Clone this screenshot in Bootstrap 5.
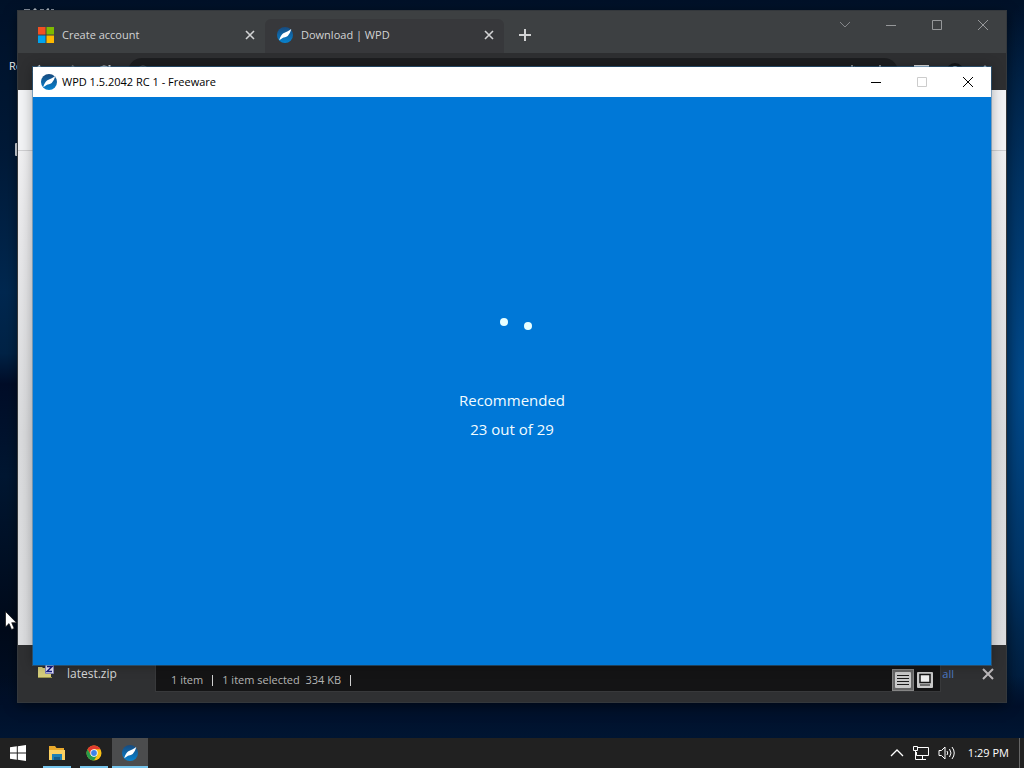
<!DOCTYPE html>
<html lang="en">
<head>
<meta charset="utf-8">
<meta name="viewport" content="width=device-width, initial-scale=1">
<title>WPD 1.5.2042 RC 1 - Freeware</title>
<link href="https://cdn.jsdelivr.net/npm/bootstrap@5.3.0/dist/css/bootstrap.min.css" rel="stylesheet">
<style>
  body { font-family: "Open Sans", "Noto Sans", sans-serif; font-size: 11px; line-height: 16px; }
  svg { display: block; flex: none; }
  button { background: none; border: 0; padding: 0; color: inherit; }
  .desktop {
    background:
      linear-gradient(180deg, transparent 88%, #00102a 92%, #001a3a 100%),
      radial-gradient(ellipse 60px 380px at 100% 50%, #004a8c 0, #003465 50%, transparent 100%),
      linear-gradient(180deg, #001128 0, #001a38 20%, #002850 38%, #002346 46%, #000d28 50%, #001732 62%, #000a1a 82%, #001430 100%);
  }
  /* windows */
  .win { position: absolute; }
  .browser-win { inset: 11px 18px 36px 18px; background: #2e2f32; box-shadow: 0 0 0 1px #34383c, 0 3px 12px #0008; }
  .files-win { left: 155px; right: 83px; bottom: 46px; height: 80px; background: #141415; border: 1px solid #38393b; color: #b4b4b4; }
  .app-win { inset: 67px 33px 73px 33px; background: #0078d7; box-shadow: 0 0 0 1px #2b6fa680, 0 0 12px #0005; }
  /* browser */
  .strip { background: #3d4042; height: 42px; flex: none; color: #d2d3d4; }
  .tab { width: 239px; height: 34px; padding: 0 10px 2px 12px; gap: 8px; border-radius: 6px 6px 0 0; }
  .tab.current { background: #37383b; }
  .tab-add { height: 34px; padding: 0 12px 2px 14px; }
  .caption-btn { width: 46px; height: 28px; display: flex; align-items: center; justify-content: center; }
  .tools { height: 37px; flex: none; padding: 0 16px 0 14px; gap: 16px; color: #e4e4e4; background: #2e2f31; }
  .omnibox { background: #1d1e20; border-radius: 14px; height: 28px; }
  .page { background: linear-gradient(180deg, #f5f5f6 0, #e8e8ea 25%, #d9dadc 62%, #dcdddf 100%); }
  .page-head { height: 61px; background: #f2f3f5; border-bottom: 1px solid #cfcfd1; }
  .shelf { height: 57px; flex: none; color: #d6d7d8; background: #2f3032; }
  .shelf a { color: #4d79c4; }
  .shelf-name { font-size: 12px; }
  .shelf-x { margin: 0 12px 0 28px; }
  .files-status { height: 22px; gap: 9px; padding: 0 4px 0 15px; }
  .rule { width: 1px; height: 11px; background: #d0d0d0; }
  .view { width: 22px; height: 22px; display: flex; align-items: center; justify-content: center; }
  .view.on { background: #666; outline: 1px solid #858585; outline-offset: -1px; }
  /* app */
  .titlebar { height: 30px; background: #fff; color: #000; }
  .app-name { padding-left: 5px; }
  .progress-text { font-size: 15px; line-height: 29px; color: #f2fcff; padding-bottom: 6px; }
  .loader { margin-bottom: 4px; }
  /* taskbar */
  .bar { height: 30px; background: #212121; color: #fff; }
  .task { width: 38px; height: 30px; display: flex; align-items: center; justify-content: center; position: relative; }
  .task.start { padding-right: 2px; }
  .task.open { width: 37px; }
  .task.open::after { content: ""; position: absolute; left: 5px; right: 4px; bottom: 0; height: 2px; background: #76c5ed; }
  .task.current { width: 36px; background: #4b4c4d; }
  .task.current::after { left: 0; right: 0; }
  .clock { font-size: 11px; margin: 0 10px 0 12px; }
  .peek { width: 5px; height: 30px; border-left: 1px solid #666; }
  .desk-label { position: absolute; left: 9px; top: 58px; color: #fff; }
  .desk-clip { position: absolute; left: 24px; top: 8px; }
  .desk-edge { position: absolute; left: 15px; top: 143px; width: 8px; height: 13px; background: #dfe5ec; border-radius: 1px; }
  .pointer { position: absolute; left: 5px; top: 611px; }
</style>
</head>
<body>
<svg width="0" height="0" class="position-absolute" aria-hidden="true">
  <defs>
    <linearGradient id="wg" x1="0" y1="0" x2="0" y2="1"><stop offset="0" stop-color="#174a7e"/><stop offset="1" stop-color="#0783d0"/></linearGradient>
    <symbol id="wpd" viewBox="0 0 16 16">
      <circle cx="8" cy="8" r="8" fill="url(#wg)"/>
      <path d="M2.200 13.300C3.100 10.500 4.300 7 7.500 5.800c2.200-.9 4.200-2 6.800-3.800C13.600 4.500 12.600 7 10.700 8.900 9 10.500 7 9.800 5.600 11 4.300 11.900 3.200 12.700 2.200 13.300z" fill="#fff"/>
    </symbol>
    <symbol id="cross" viewBox="0 0 10 10"><path d="M1 1l8 8M9 1L1 9" stroke="currentColor" stroke-width="1.600"/></symbol>
    <symbol id="cross-thin" viewBox="0 0 12 12"><path d="M1 1l10 10M11 1L1 11" stroke="currentColor"/></symbol>
  </defs>
</svg>

<div class="desktop d-flex flex-column vh-100 overflow-hidden">
  <main class="flex-grow-1 position-relative">
    <svg class="desk-clip" width="30" height="4" aria-hidden="true"><path d="M0 2h6M9 3l2-2 2 2M16 2h4M22 3l2-2 1 2M27 2h3" stroke="#b9c0ca" stroke-width="1.500" fill="none"/></svg>
    <span class="desk-label">Re</span>
    <span class="desk-edge"></span>

    <section class="win browser-win d-flex flex-column" aria-label="Browser">
      <div class="strip d-flex align-items-end">
        <div class="tab d-flex align-items-center ms-2">
          <svg width="16" height="16"><path d="M0 0h7.500v7.500H0z" fill="#f25022"/><path d="M8.500 0H16v7.500H8.500z" fill="#7fba00"/><path d="M0 8.500h7.500V16H0z" fill="#00a4ef"/><path d="M8.500 8.500H16V16H8.500z" fill="#ffb900"/></svg>
          <span class="flex-grow-1">Create account</span>
          <button aria-label="Close tab"><svg width="10" height="10"><use href="#cross"/></svg></button>
        </div>
        <div class="tab current d-flex align-items-center">
          <svg width="16" height="16"><use href="#wpd"/></svg>
          <span class="flex-grow-1">Download | WPD</span>
          <button aria-label="Close tab"><svg width="10" height="10"><use href="#cross"/></svg></button>
        </div>
        <button class="tab-add" aria-label="New tab"><svg width="14" height="12"><path d="M7 0v12M1 6h12" stroke="currentColor" stroke-width="2"/></svg></button>
        <div class="d-flex ms-auto align-self-start">
          <button class="caption-btn" aria-label="Search tabs"><svg width="12" height="12"><path d="M1 3l5 5 5-5" stroke="#85878a" fill="none"/></svg></button>
          <button class="caption-btn" aria-label="Minimize"><svg width="12" height="12"><path d="M1 6.500h10" stroke="#96989a"/></svg></button>
          <button class="caption-btn" aria-label="Maximize"><svg width="12" height="12"><path d="M1.500 1.500h9v9h-9z" stroke="#96989a" fill="none"/></svg></button>
          <button class="caption-btn" aria-label="Close"><svg width="12" height="12"><path d="M1 1l10 10M11 1L1 11" stroke="#96989a"/></svg></button>
        </div>
      </div>
      <div class="tools d-flex align-items-center">
        <button aria-label="Back"><svg width="16" height="16"><path d="M8 1.500L2 8l6 6M2 8h13" stroke="currentColor" stroke-width="2" fill="none"/></svg></button>
        <button aria-label="Forward"><svg width="16" height="16"><path d="M8 1.500L14 8l-6 6M14 8H1" stroke="#777" stroke-width="2" fill="none"/></svg></button>
        <button aria-label="Reload"><svg width="16" height="16"><path d="M12.500 4.500A6 6 0 1 0 14 9M13.500 1v4.500H9" stroke="currentColor" stroke-width="2" fill="none"/></svg></button>
        <div class="omnibox flex-grow-1 d-flex align-items-center justify-content-between px-2">
          <svg width="14" height="14"><circle cx="7" cy="7" r="6" stroke="#666" fill="none"/></svg>
          <svg width="44" height="16"><path d="M6 1v4M8 3l3 3-3 3M34 1v10" stroke="#aaa" stroke-width="1.500" fill="none"/></svg>
        </div>
        <svg width="16" height="16"><path d="M1 2h13v12H1z" stroke="currentColor" stroke-width="2" fill="none"/></svg>
        <svg width="18" height="22"><circle cx="9" cy="11" r="9" fill="#151618"/><circle cx="9" cy="8" r="3" fill="#ccc"/></svg>
        <svg width="10" height="16"><circle cx="5" cy="3" r="1.500" fill="currentColor"/><circle cx="5" cy="8" r="1.500" fill="currentColor"/></svg>
      </div>
      <div class="page flex-grow-1"><div class="page-head"></div></div>
      <div class="shelf d-flex align-items-center">
        <svg class="ms-3 me-2" width="25" height="20"><path d="M4 3h4l1 1h8v10H4z" fill="#d7cf7c"/><path d="M4 13h14v1H4z" fill="#9b954c"/><path d="M11.500.5h8v9h-8z" fill="#e7e7fb" stroke="#8787c0"/><path d="M13 2.500h5l-5 5h5" stroke="#171b83" stroke-width="1.500" fill="none"/></svg>
        <span class="shelf-name">latest.zip</span>
        <a href="#" class="ms-auto text-decoration-none">all</a>
        <button class="shelf-x" aria-label="Close downloads"><svg width="12" height="12"><path d="M1 1l10 10M11 1L1 11" stroke="#bdb9bb" stroke-width="2"/></svg></button>
      </div>
    </section>

    <section class="win files-win d-flex flex-column justify-content-end" aria-label="Files">
      <div class="files-status d-flex align-items-center">
        <span>1 item</span><span class="rule"></span>
        <span>1 item selected&nbsp; 334 KB</span><span class="rule"></span>
        <div class="d-flex ms-auto">
          <button class="view on" aria-label="Details"><svg width="16" height="16"><rect width="16" height="16" rx="1" fill="#c9c9c9"/><path d="M2 3.500h12M2 6.500h12M2 9.500h12M2 12.500h12" stroke="#1c1c1c"/></svg></button>
          <button class="view" aria-label="Thumbnails"><svg width="16" height="16"><rect width="16" height="16" rx="1" fill="#c9c9c9"/><path d="M3 2.500h10v8H3z" fill="#eee" stroke="#151515" stroke-width="1.500"/><path d="M3 13h10" stroke="#151515"/></svg></button>
        </div>
      </div>
    </section>

    <section class="win app-win d-flex flex-column" aria-label="WPD">
      <header class="titlebar d-flex align-items-center">
        <svg class="ms-2" width="16" height="16"><use href="#wpd"/></svg>
        <span class="app-name">WPD 1.5.2042 RC 1 - Freeware</span>
        <div class="d-flex ms-auto">
          <button class="caption-btn" aria-label="Minimize"><svg width="12" height="12"><path d="M1 6.500h10" stroke="#000"/></svg></button>
          <button class="caption-btn" aria-label="Maximize" disabled><svg width="12" height="12"><path d="M1.500 1.500h9v9h-9z" stroke="#ccc" fill="none"/></svg></button>
          <button class="caption-btn" aria-label="Close"><svg width="12" height="12"><use href="#cross-thin"/></svg></button>
        </div>
      </header>
      <div class="flex-grow-1 d-flex flex-column align-items-center justify-content-center progress-text">
        <svg class="loader" width="60" height="70" role="img" aria-label="Loading"><circle cx="22" cy="10" r="4" fill="#e8ffff"/><circle cx="46" cy="14" r="4" fill="#e8ffff"/></svg>
        <div>Recommended</div>
        <div>23 out of 29</div>
      </div>
    </section>

    <svg class="pointer" width="12" height="20" aria-hidden="true"><path d="M.5.5v15.500l3.500-3.400 2.500 5.900 2.700-1.100-2.500-5.700h4.800z" fill="#fff" stroke="#111" stroke-width=".7"/></svg>
  </main>

  <footer class="bar d-flex align-items-center">
    <button class="task start" aria-label="Start"><svg width="16" height="16"><path d="M0 2.300l6.800-1v6.200H0zM7.800 1.200L16 0v7.500H7.800zM0 8.500h6.800v6.200l-6.800-1zM7.800 8.500H16V16l-8.200-1.200z" fill="#fff"/></svg></button>
    <button class="task open" aria-label="File Explorer"><svg width="18" height="16"><path d="M1 1h6l1.500 2H16v11H1z" fill="#e9a92c"/><path d="M1 5h16v10H1z" fill="#fbd163"/><path d="M4 9h10v6H4z" fill="#1f80b5"/><path d="M6 12h6v3H6z" fill="#155c8a"/></svg></button>
    <button class="task open" aria-label="Chrome"><svg width="16" height="16" viewBox="0 0 16 16"><circle cx="8" cy="8" r="7.500" fill="#fbc116"/><path d="M1.500 4.250A7.500 7.500 0 0 1 14.500 4.250L8 4.300 4.700 9.800z" fill="#e33b2e"/><path d="M1.500 4.250A7.500 7.500 0 0 0 8 15.500L11.300 9.800 8 11.600 4.700 9.800z" fill="#269b4b"/><circle cx="8" cy="8" r="3.700" fill="#fff"/><circle cx="8" cy="8" r="2.900" fill="#3e82e8"/></svg></button>
    <button class="task open current" aria-label="WPD"><svg width="16" height="16"><use href="#wpd"/></svg></button>
    <div class="d-flex align-items-center ms-auto">
      <svg width="14" height="8"><path d="M1 7l6-6 6 6" stroke="#fff" stroke-width="1.300" fill="none"/></svg>
      <svg class="ms-2" width="18" height="16"><path d="M5 2.500h11.500v8H4.500V7M7 14.500h7M10.500 11v3" stroke="#fff" fill="none"/><path d="M1.500 1.500h4v4h-4zM3.500 6v8.500H7" stroke="#fff" fill="none"/></svg>
      <svg class="ms-2" width="18" height="16"><path d="M1 5.500h2.500L7 2v12l-3.500-3.500H1z" stroke="#fff" fill="none"/><path d="M9 6q1.500 2 0 4M11.500 4q3 4 0 8M14 2q4.500 6 0 12" stroke="#fff" fill="none"/></svg>
      <time class="clock">1:29 PM</time>
      <span class="peek"></span>
    </div>
  </footer>
</div>
<script src="https://cdn.jsdelivr.net/npm/bootstrap@5.3.0/dist/js/bootstrap.bundle.min.js"></script>
</body>
</html>
